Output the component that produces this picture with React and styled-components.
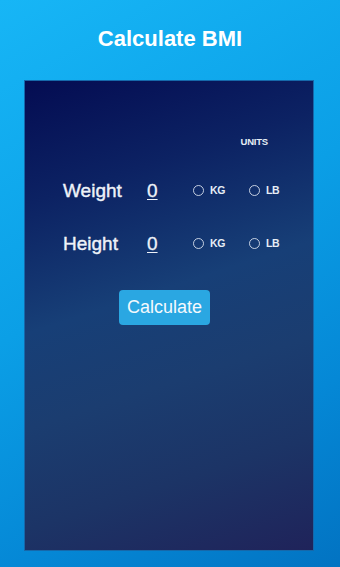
import React from "react";
import styled, { createGlobalStyle } from "styled-components";

const GlobalStyle = createGlobalStyle`
  html, body {
    margin: 0;
    padding: 0;
  }
  body {
    font-family: "Liberation Sans", Arial, sans-serif;
  }
`;

const Screen = styled.div`
  width: 340px;
  height: 567px;
  box-sizing: border-box;
  padding: 28px 26px 16px 24px;
  display: flex;
  flex-direction: column;
  align-items: stretch;
  background: linear-gradient(150deg, #17b6f6 0%, #0b9fe6 45%, #0588d6 75%, #0273c2 100%);
  overflow: hidden;
`;

const Title = styled.h1`
  margin: 0 0 30px;
  text-align: center;
  font-size: 22px;
  line-height: 22px;
  font-weight: bold;
  color: #ffffff;
  padding-left: 2px;
`;

const Panel = styled.div`
  flex: 1;
  box-sizing: border-box;
  border: 1px solid #1668aa;
  padding: 56px 0 0 0;
  display: flex;
  flex-direction: column;
  background: linear-gradient(
    162deg,
    #040c52 0%,
    #0c2263 22%,
    #173f77 45%,
    #1b3d70 62%,
    #1c3466 80%,
    #1f235a 100%
  );
`;

const UnitsRow = styled.div`
  display: flex;
  justify-content: flex-end;
  padding-right: 45px;
  margin-bottom: 34px;
`;

const UnitsLabel = styled.span`
  font-size: 9.5px;
  line-height: 10px;
  font-weight: bold;
  letter-spacing: -0.2px;
  color: #e6edf5;
`;

const Row = styled.div`
  display: flex;
  align-items: center;
  padding-left: 38px;
  margin-bottom: ${(p) => p.$gap}px;
`;

const Label = styled.span`
  width: 84px;
  font-size: 19px;
  line-height: 19px;
  color: #eef2f8;
  -webkit-text-stroke: 0.4px #eef2f8;
`;

const Value = styled.span`
  width: 46px;
  font-size: 19px;
  line-height: 19px;
  color: #eef2f8;
  -webkit-text-stroke: 0.3px #eef2f8;
  text-decoration: underline;
  text-underline-offset: 2px;
`;

const Option = styled.label`
  width: 56px;
  display: flex;
  align-items: center;
  gap: 6px;
`;

const Circle = styled.span`
  width: 11px;
  height: 11px;
  box-sizing: border-box;
  border-radius: 50%;
  border: 1.5px solid rgba(225, 232, 242, 0.85);
`;

const OptionText = styled.span`
  font-size: 10.5px;
  line-height: 11px;
  font-weight: bold;
  letter-spacing: -0.3px;
  color: #e6edf5;
`;

const ButtonRow = styled.div`
  display: flex;
  justify-content: center;
  padding-right: 9px;
`;

const Button = styled.button`
  width: 91px;
  height: 35px;
  border: none;
  border-radius: 4px;
  background: #2aa7e2;
  color: #f4f9fd;
  font-family: "Liberation Sans", Arial, sans-serif;
  font-size: 18px;
  padding: 0;
  cursor: pointer;
`;

function UnitOption({ text }) {
  return (
    <Option>
      <Circle />
      <OptionText>{text}</OptionText>
    </Option>
  );
}

const rows = [
  { label: "Weight", gap: 34 },
  { label: "Height", gap: 37 },
];

export default function App() {
  return (
    <>
      <GlobalStyle />
      <Screen>
        <Title>Calculate BMI</Title>
        <Panel>
          <UnitsRow>
            <UnitsLabel>UNITS</UnitsLabel>
          </UnitsRow>
          {rows.map((r) => (
            <Row key={r.label} $gap={r.gap}>
              <Label>{r.label}</Label>
              <Value>0</Value>
              <UnitOption text="KG" />
              <UnitOption text="LB" />
            </Row>
          ))}
          <ButtonRow>
            <Button>Calculate</Button>
          </ButtonRow>
        </Panel>
      </Screen>
    </>
  );
}
